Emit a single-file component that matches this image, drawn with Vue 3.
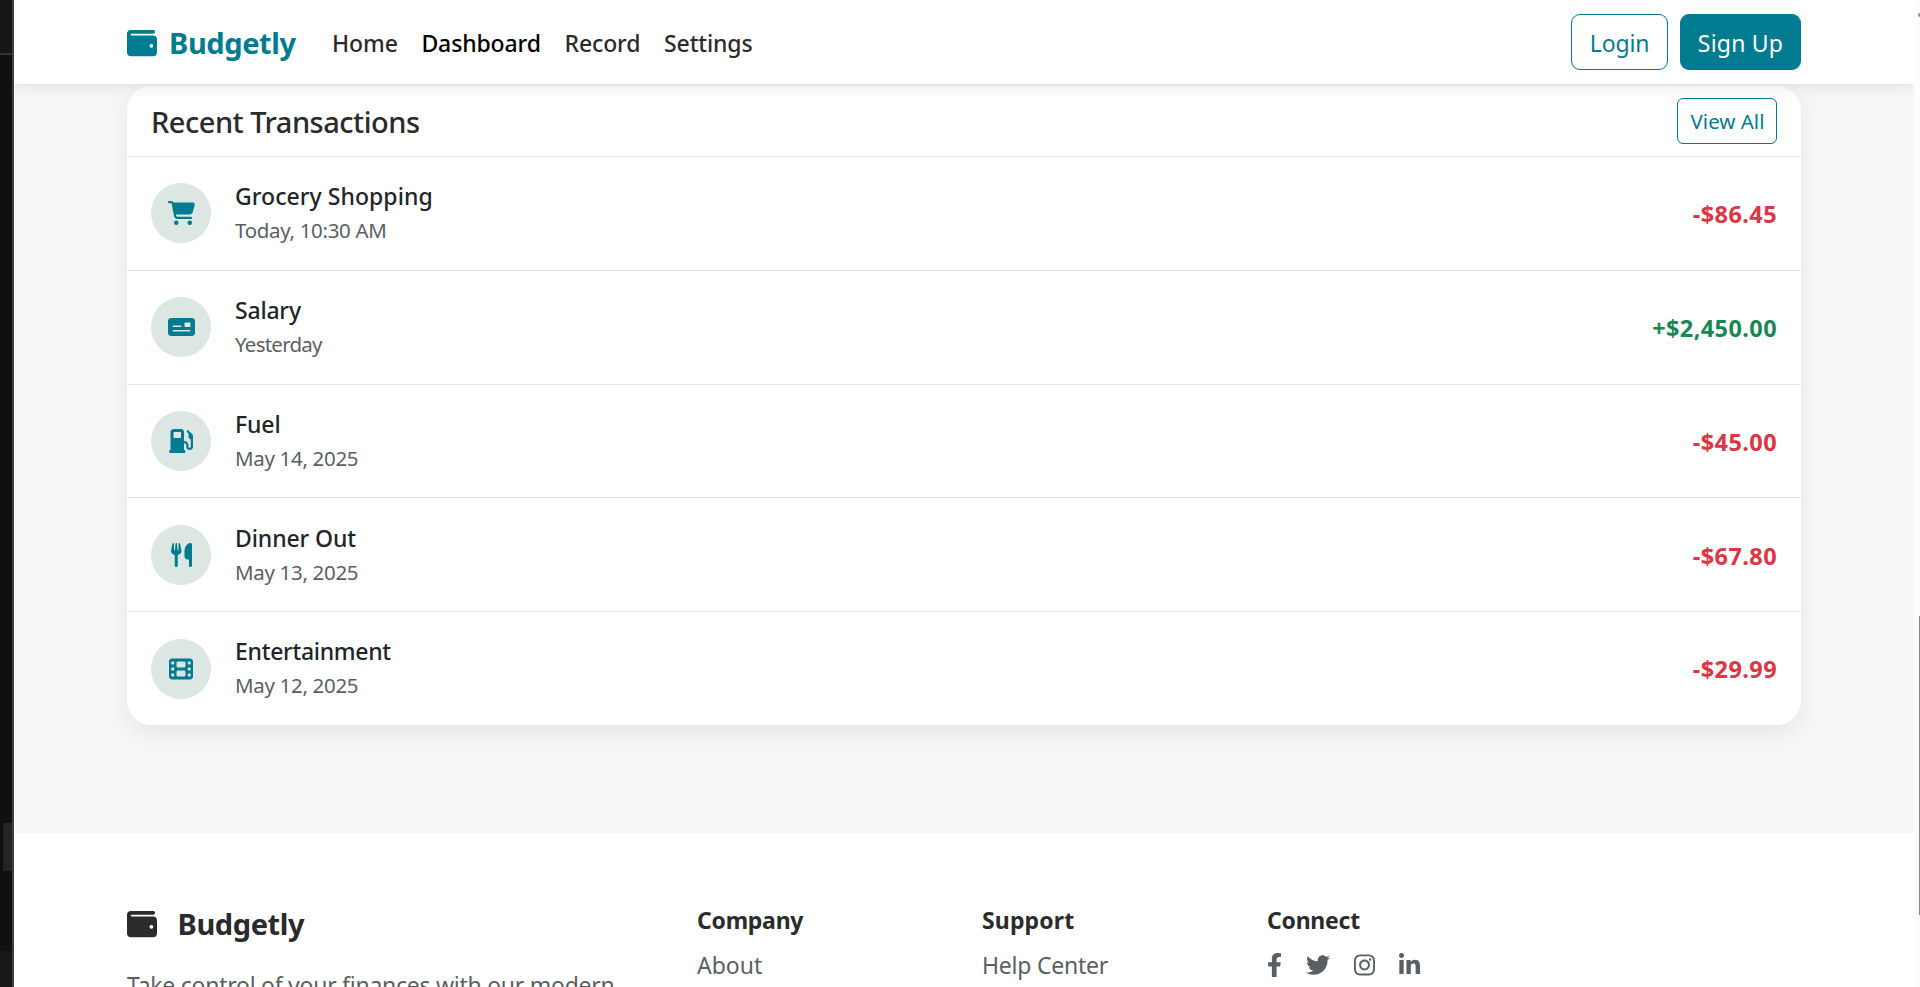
<script setup>
const links = [
  { label: 'Home' },
  { label: 'Dashboard', active: true },
  { label: 'Record' },
  { label: 'Settings' },
]

const icons = {
  wallet: { w: 512, d: 'M64 32C28.7 32 0 60.7 0 96V416c0 35.3 28.7 64 64 64H448c35.3 0 64-28.7 64-64V192c0-35.3-28.7-64-64-64H80c-8.8 0-16-7.2-16-16s7.2-16 16-16H448c17.7 0 32-14.3 32-32s-14.3-32-32-32H64zM416 272a32 32 0 1 1 0 64 32 32 0 1 1 0-64z' },
  cart: { w: 576, d: 'M0 24C0 10.7 10.7 0 24 0H69.5c22 0 41.5 12.8 50.6 32h411c26.3 0 45.5 25 38.6 50.4l-41 152.3c-8.5 31.4-37 53.3-69.5 53.3H170.7l5.4 28.5c2.2 11.3 12.1 19.5 23.6 19.5H488c13.3 0 24 10.7 24 24s-10.7 24-24 24H199.7c-34.6 0-64.3-24.6-70.7-58.5L77.4 54.5c-.7-3.8-4-6.5-7.9-6.5H24C10.7 48 0 37.3 0 24zM128 464a48 48 0 1 1 96 0 48 48 0 1 1 -96 0zm336-48a48 48 0 1 1 0 96 48 48 0 1 1 0-96z' },
  check: { w: 576, d: 'M64 64C28.7 64 0 92.7 0 128V384c0 35.3 28.7 64 64 64H512c35.3 0 64-28.7 64-64V128c0-35.3-28.7-64-64-64H64zm48 160H272c8.8 0 16 7.2 16 16s-7.2 16-16 16H112c-8.8 0-16-7.2-16-16s7.2-16 16-16zM96 336c0-8.8 7.2-16 16-16H464c8.8 0 16 7.2 16 16s-7.2 16-16 16H112c-8.8 0-16-7.2-16-16zM376 160h80c13.3 0 24 10.7 24 24v48c0 13.3-10.7 24-24 24H376c-13.3 0-24-10.7-24-24V184c0-13.3 10.7-24 24-24z' },
  fuel: { w: 512, d: 'M32 64C32 28.7 60.7 0 96 0H256c35.3 0 64 28.7 64 64V256h8c48.6 0 88 39.4 88 88v32c0 13.3 10.7 24 24 24s24-10.7 24-24V222c-27.6-7.1-48-32.2-48-62V96L384 64c-8.8-8.8-8.8-23.2 0-32s23.2-8.8 32 0l77.3 77.3c12 12 18.7 28.3 18.7 45.3V168v24 32V376c0 39.8-32.2 72-72 72s-72-32.2-72-72V344c0-22.1-17.9-40-40-40h-8V448c17.7 0 32 14.3 32 32s-14.3 32-32 32H32c-17.7 0-32-14.3-32-32s14.3-32 32-32V64zM96 80v96c0 8.8 7.2 16 16 16H240c8.8 0 16-7.2 16-16V80c0-8.8-7.2-16-16-16H112c-8.8 0-16 7.2-16 16z' },
  utensils: { w: 448, d: 'M416 0C400 0 288 32 288 176V288c0 35.3 28.7 64 64 64h32V480c0 17.7 14.3 32 32 32s32-14.3 32-32V352 240 32c0-17.7-14.3-32-32-32zM64 16C64 7.8 57.9 1 49.7 .1S34.2 4.6 32.4 12.5L2.1 148.8C.7 155.1 0 161.5 0 167.9c0 45.9 35.1 83.6 80 87.7V480c0 17.7 14.3 32 32 32s32-14.3 32-32V255.6c44.9-4.1 80-41.8 80-87.7c0-6.4-.7-12.8-2.1-19.1L191.6 12.5c-1.8-8-9.3-13.3-17.4-12.4S160 7.8 160 16V150.2c0 5.4-4.4 9.8-9.8 9.8c-5.1 0-9.3-3.9-9.8-9L127.9 14.6C127.2 6.3 120.3 0 112 0s-15.2 6.3-15.9 14.6L83.7 151c-.5 5.1-4.7 9-9.8 9c-5.4 0-9.8-4.4-9.8-9.8V16z' },
  film: { w: 512, d: 'M0 96C0 60.7 28.7 32 64 32H448c35.3 0 64 28.7 64 64V416c0 35.3-28.7 64-64 64H64c-35.3 0-64-28.7-64-64V96zM48 368v32c0 8.8 7.2 16 16 16H96c8.8 0 16-7.2 16-16V368c0-8.8-7.2-16-16-16H64c-8.8 0-16 7.2-16 16zm368-16c-8.8 0-16 7.2-16 16v32c0 8.8 7.2 16 16 16h32c8.8 0 16-7.2 16-16V368c0-8.8-7.2-16-16-16H416zM48 240v32c0 8.8 7.2 16 16 16H96c8.8 0 16-7.2 16-16V240c0-8.8-7.2-16-16-16H64c-8.8 0-16 7.2-16 16zm368-16c-8.8 0-16 7.2-16 16v32c0 8.8 7.2 16 16 16h32c8.8 0 16-7.2 16-16V240c0-8.8-7.2-16-16-16H416zM48 112v32c0 8.8 7.2 16 16 16H96c8.8 0 16-7.2 16-16V112c0-8.8-7.2-16-16-16H64c-8.8 0-16 7.2-16 16zM416 96c-8.8 0-16 7.2-16 16v32c0 8.8 7.2 16 16 16h32c8.8 0 16-7.2 16-16V112c0-8.8-7.2-16-16-16H416zM160 128v64c0 17.7 14.3 32 32 32H320c17.7 0 32-14.3 32-32V128c0-17.7-14.3-32-32-32H192c-17.7 0-32 14.3-32 32zm32 160c-17.7 0-32 14.3-32 32v64c0 17.7 14.3 32 32 32H320c17.7 0 32-14.3 32-32V320c0-17.7-14.3-32-32-32H192z' },
}

const transactions = [
  { icon: 'cart', title: 'Grocery Shopping', date: 'Today, 10:30 AM', amount: '-$86.45' },
  { icon: 'check', title: 'Salary', date: 'Yesterday', amount: '+$2,450.00', income: true },
  { icon: 'fuel', title: 'Fuel', date: 'May 14, 2025', amount: '-$45.00' },
  { icon: 'utensils', title: 'Dinner Out', date: 'May 13, 2025', amount: '-$67.80' },
  { icon: 'film', title: 'Entertainment', date: 'May 12, 2025', amount: '-$29.99' },
]

const socials = [
  { name: 'facebook', box: '0 0 320 512', d: 'M279.14 288l14.22-92.66h-88.91v-60.13c0-25.35 12.42-50.06 52.24-50.06h40.42V6.26S260.43 0 225.36 0c-73.22 0-121.08 44.38-121.08 124.72v70.62H22.89V288h81.39v224h100.17V288z' },
  { name: 'twitter', box: '0 0 512 512', d: 'M459.37 151.716c.325 4.548.325 9.097.325 13.645 0 138.72-105.583 298.558-298.558 298.558-59.452 0-114.68-17.219-161.137-47.106 8.447.974 16.568 1.299 25.34 1.299 49.055 0 94.213-16.568 130.274-44.832-46.132-.975-84.792-31.188-98.112-72.772 6.498.974 12.995 1.624 19.818 1.624 9.421 0 18.843-1.3 27.614-3.573-48.081-9.747-84.143-51.98-84.143-102.985v-1.299c13.969 7.797 30.214 12.67 47.431 13.319-28.264-18.843-46.781-51.005-46.781-87.391 0-19.492 5.197-37.36 14.294-52.954 51.655 63.675 129.3 105.258 216.365 109.807-1.624-7.797-2.599-15.918-2.599-24.04 0-57.828 46.782-104.934 104.934-104.934 30.213 0 57.502 12.67 76.67 33.137 23.715-4.548 46.456-13.32 66.599-25.34-7.798 24.366-24.366 44.833-46.132 57.827 21.117-2.273 41.584-8.122 60.426-16.243-14.292 20.791-32.161 39.308-52.628 54.253z' },
  { name: 'instagram', box: '0 0 448 512', d: 'M224.1 141c-63.6 0-114.9 51.3-114.9 114.9s51.3 114.9 114.9 114.9S339 319.5 339 255.9 287.7 141 224.1 141zm0 189.6c-41.1 0-74.7-33.5-74.7-74.7s33.5-74.7 74.7-74.7 74.7 33.5 74.7 74.7-33.6 74.7-74.7 74.7zm146.4-194.3c0 14.9-12 26.8-26.8 26.8-14.9 0-26.8-12-26.8-26.8s12-26.8 26.8-26.8 26.8 12 26.8 26.8zm76.1 27.2c-1.7-35.9-9.9-67.7-36.2-93.9-26.2-26.2-58-34.4-93.9-36.2-37-2.1-147.9-2.1-184.9 0-35.8 1.7-67.6 9.9-93.9 36.1s-34.4 58-36.2 93.9c-2.1 37-2.1 147.9 0 184.9 1.7 35.9 9.9 67.7 36.2 93.9s58 34.4 93.9 36.2c37 2.1 147.9 2.1 184.9 0 35.9-1.7 67.7-9.9 93.9-36.2 26.2-26.2 34.4-58 36.2-93.9 2.1-37 2.1-147.8 0-184.8zM398.8 388c-7.8 19.6-22.9 34.7-42.6 42.6-29.5 11.7-99.5 9-132.1 9s-102.7 2.6-132.1-9c-19.6-7.8-34.7-22.9-42.6-42.6-11.7-29.5-9-99.5-9-132.1s-2.6-102.7 9-132.1c7.8-19.6 22.9-34.7 42.6-42.6 29.5-11.7 99.5-9 132.1-9s102.7-2.6 132.1 9c19.6 7.8 34.7 22.9 42.6 42.6 11.7 29.5 9 99.5 9 132.1s2.7 102.7-9 132.1z' },
  { name: 'linkedin', box: '0 0 448 512', d: 'M100.28 448H7.4V148.9h92.88zM53.79 108.1C24.09 108.1 0 83.5 0 53.8a53.79 53.79 0 0 1 107.58 0c0 29.7-24.1 54.3-53.79 54.3zM447.9 448h-92.68V302.4c0-34.7-.7-79.2-48.29-79.2-48.29 0-55.69 37.7-55.69 76.7V448h-92.78V148.9h89.08v40.8h1.3c12.4-23.5 42.69-48.3 87.88-48.3 94 0 111.28 61.9 111.28 142.3V448z' },
]
</script>

<template>
  <div class="window">
    <aside class="edge"></aside>
    <div class="page">
      <header class="navbar">
        <a class="brand">
          <svg class="wallet" viewBox="0 0 512 512"><path :d="icons.wallet.d" /></svg>
          <span>Budgetly</span>
        </a>
        <nav class="links">
          <a v-for="l in links" :key="l.label" :class="{ active: l.active }">{{ l.label }}</a>
        </nav>
        <div class="auth">
          <button class="btn login">Login</button>
          <button class="btn signup">Sign Up</button>
        </div>
      </header>

      <main class="content">
        <section class="card">
          <div class="card-head">
            <h5>Recent Transactions</h5>
            <button class="view-all">View All</button>
          </div>
          <ul class="list">
            <li v-for="t in transactions" :key="t.title" :class="t.icon">
              <span class="circle">
                <svg :viewBox="`0 0 ${icons[t.icon].w} 512`"><path :d="icons[t.icon].d" /></svg>
              </span>
              <div class="info">
                <h6>{{ t.title }}</h6>
                <small>{{ t.date }}</small>
              </div>
              <span class="amount" :class="{ income: t.income }">{{ t.amount }}</span>
            </li>
          </ul>
        </section>
      </main>

      <footer class="footer">
        <div>
          <div class="foot-brand">
            <svg class="wallet" viewBox="0 0 512 512"><path :d="icons.wallet.d" /></svg>
            <span>Budgetly</span>
          </div>
          <p class="tagline">Take control of your finances with our modern</p>
        </div>
        <div>
          <h6>Company</h6>
          <a class="foot-link about">About</a>
        </div>
        <div>
          <h6 class="support">Support</h6>
          <a class="foot-link">Help Center</a>
        </div>
        <div>
          <h6>Connect</h6>
          <div class="socials">
            <svg v-for="s in socials" :key="s.name" :class="s.name" :viewBox="s.box"><path :d="s.d" /></svg>
          </div>
        </div>
      </footer>
    </div>
    <div class="scrollbar">
      <i class="arrow"></i>
      <i class="thumb"></i>
    </div>
  </div>
</template>

<style>
body {
  overflow: hidden;
}
</style>

<style scoped>
* {
  box-sizing: border-box;
  margin: 0;
  padding: 0;
}
.window {
  display: flex;
  height: 987px;
  overflow: hidden;
  font-family: "Noto Sans", "Open Sans", sans-serif;
  font-size: 23px;
  background: #fff;
}
svg {
  display: block;
  flex: none;
  fill: currentColor;
  height: 24px;
}
.edge {
  flex: 0 0 14px;
  border-right: 2px solid #404040;
  background:
    linear-gradient(#242424, #242424) 3px 823px / 9px 48px no-repeat,
    linear-gradient(#151515 0 53px, #333 53px 55px, #101010 55px 951px, #181818 951px);
}
.page {
  flex: 0 0 1900px;
  overflow: hidden;
  background: #f7f7f7;
}
.scrollbar {
  flex: 0 0 6px;
  background: #fcfcfc;
  display: flex;
  flex-direction: column;
  align-items: flex-end;
}
.arrow {
  width: 2px;
  height: 4px;
  margin-top: 13px;
  border-radius: 2px 0 0 2px;
  background: #8a8a8a;
}
.thumb {
  width: 1px;
  height: 299px;
  margin-top: 599px;
  background: #8a8a8a;
}

.navbar {
  position: relative;
  z-index: 1;
  height: 84px;
  padding: 0 113px;
  display: flex;
  align-items: center;
  background: #fff;
  box-shadow: 0 2px 15px rgba(0, 0, 0, 0.1);
}
.brand {
  display: flex;
  align-items: center;
  width: 205px;
  padding-top: 2px;
  color: #007b8f;
  font-size: 29px;
  font-weight: 700;
  letter-spacing: -0.4px;
  line-height: 44px;
}
.wallet {
  width: 30px;
  height: 30px;
}
.brand span {
  margin-left: 12px;
}
.links {
  display: flex;
  gap: 23.7px;
  padding-top: 2px;
  line-height: 36px;
  font-weight: 500;
  letter-spacing: -0.13px;
  color: #2b2b2b;
}
.links .active {
  color: #000;
}
.auth {
  display: flex;
  gap: 12px;
  margin-left: auto;
}
.btn {
  height: 56px;
  padding-top: 2px;
  border: 1px solid #007b8f;
  border-radius: 9px;
  font: 400 23px/36px "Noto Sans", "Open Sans", sans-serif;
}
.login {
  width: 97px;
  background: #fff;
  color: #007b8f;
  letter-spacing: -0.14px;
}
.signup {
  width: 121px;
  background: #007b8f;
  color: #fff;
  letter-spacing: 0.2px;
}

.content {
  height: 749px;
  padding: 2px 113px 0;
}
.card {
  height: 639px;
  border-radius: 24px;
  background: #fff;
  box-shadow: 0 8px 24px rgba(0, 0, 0, 0.08);
}
.card-head {
  height: 71px;
  padding: 0 24px;
  display: flex;
  align-items: center;
  justify-content: space-between;
  border-bottom: 1px solid #dce6e3;
}
.card-head h5 {
  font-size: 29px;
  font-weight: 500;
  letter-spacing: -0.49px;
  line-height: 40px;
  padding-top: 1px;
  color: #2b2b2b;
}
.view-all {
  width: 100px;
  height: 46px;
  padding-left: 1px;
  border: 1px solid #007b8f;
  border-radius: 6px;
  background: #fff;
  color: #007b8f;
  font: 400 20.5px/30px "Noto Sans", "Open Sans", sans-serif;
}
.list {
  list-style: none;
}
.list li {
  height: 113.8px;
  padding: 0 24px;
  display: flex;
  align-items: center;
  border-bottom: 1px solid #dce6e3;
}
.list li:last-child {
  height: 112.8px;
  border-bottom: 0;
}
.circle {
  width: 60px;
  height: 60px;
  border-radius: 50%;
  background: #dce6e3;
  color: #007b8f;
  display: flex;
  align-items: center;
  justify-content: center;
}
.info {
  margin-left: 24px;
  padding-top: 0.6px;
}
.info h6 {
  font-size: 23px;
  font-weight: 500;
  letter-spacing: -0.1px;
  line-height: 33px;
  color: #212529;
}
.info small {
  display: block;
  font-size: 20.5px;
  letter-spacing: -0.32px;
  line-height: 34px;
  color: #5a5f63;
}
.cart h6 {
  letter-spacing: 0.05px;
}
.check h6 {
  letter-spacing: -0.2px;
}
.film h6 {
  letter-spacing: -0.3px;
}
.check small {
  letter-spacing: -0.75px;
}
.amount {
  margin-left: auto;
  padding-top: 1.8px;
  font-size: 23.5px;
  font-weight: 700;
  letter-spacing: 0.4px;
  line-height: 36px;
  color: #dc3545;
}
.amount.income {
  color: #198754;
}

.footer {
  height: 154px;
  padding: 69px 113px 0;
  display: grid;
  grid-template-columns: 570px 285px 285px 1fr;
  background: #fff;
  overflow: hidden;
}
.foot-brand {
  display: flex;
  align-items: center;
  font-size: 29px;
  font-weight: 700;
  letter-spacing: -0.4px;
  line-height: 44px;
  color: #2b2b2b;
}
.foot-brand span {
  margin-left: 20.5px;
}
.tagline {
  margin-top: 21px;
  font-size: 23px;
  letter-spacing: -0.26px;
  line-height: 36px;
  white-space: nowrap;
  color: #5a5f63;
}
.footer h6 {
  font-size: 23px;
  font-weight: 700;
  letter-spacing: -0.25px;
  line-height: 36px;
  color: #2b2b2b;
}
.footer h6.support {
  letter-spacing: 0.15px;
}
.foot-link {
  display: block;
  margin-top: 9px;
  letter-spacing: -0.22px;
  line-height: 36px;
  color: #5a5f63;
}
.foot-link.about {
  letter-spacing: 0;
}
.socials {
  display: flex;
  margin-top: 15px;
  color: #5a5f63;
}
.facebook {
  width: 15px;
}
.twitter {
  width: 24px;
  margin-left: 24px;
}
.instagram {
  width: 21px;
  margin-left: 24px;
}
.linkedin {
  width: 21px;
  margin-left: 24px;
}
</style>
